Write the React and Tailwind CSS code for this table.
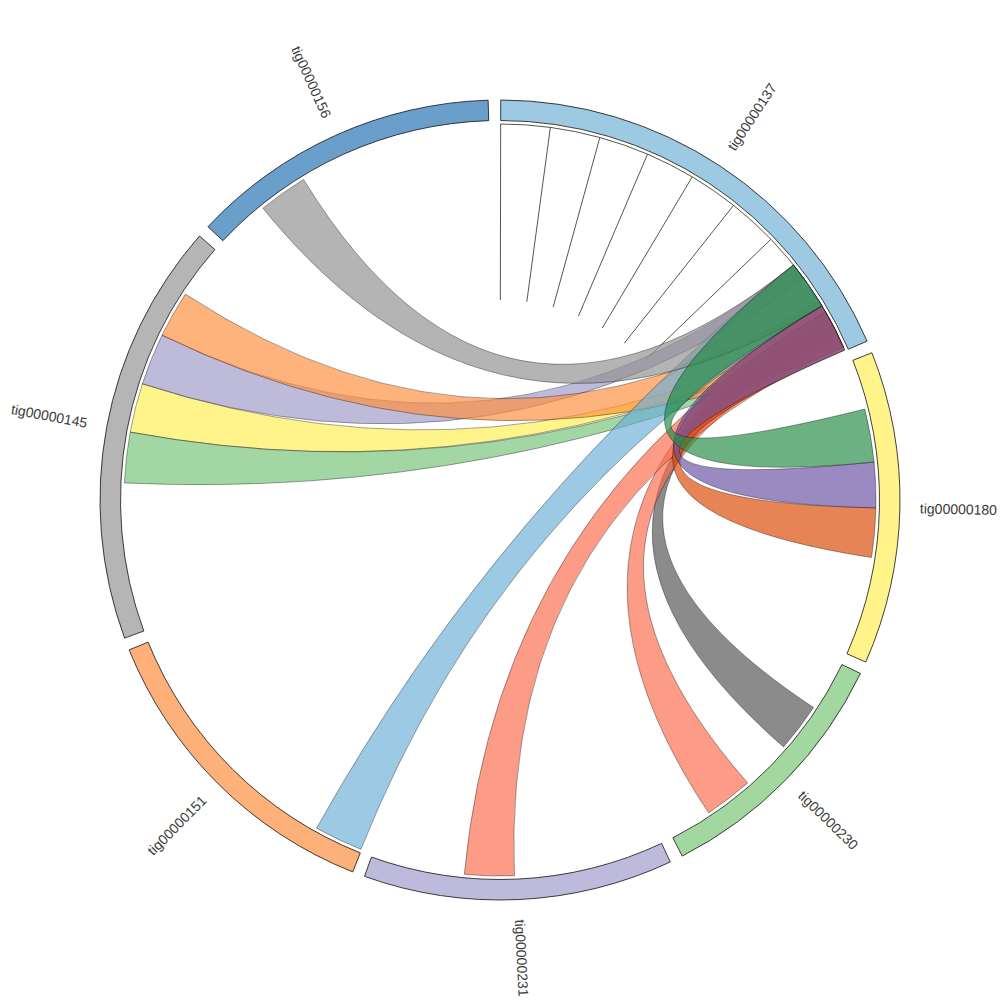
import React from "react";

const CX = 500;
const CY = 500;
const R_OUT = 400;
const R_IN = 379.5;
const R_CHORD = 376;

// angles in degrees, clockwise from 12 o'clock
const groups = [
  { name: "tig00000137", start: 0.1, end: 66.6, color: "#9dc9e2" },
  { name: "tig00000180", start: 68.4, end: 113.9, color: "#fff38a" },
  { name: "tig00000230", start: 115.7, end: 152.9, color: "#a2d8a0" },
  { name: "tig00000231", start: 154.8, end: 199.8, color: "#bdbadb" },
  { name: "tig00000151", start: 201.6, end: 248.0, color: "#fdb077" },
  { name: "tig00000145", start: 249.8, end: 311.3, color: "#b5b5b5" },
  { name: "tig00000156", start: 313.1, end: 358.3, color: "#6a9fcc" },
];

// draw order matters, later ones sit on top
const chords = [
  { s: [280.4, 288], t: [62, 63.5], color: "#ffef50" },
  { s: [272.6, 280.4], t: [64, 66], color: "#74c476" },
  { s: [288, 296], t: [51.4, 54], color: "#9e9ac8" },
  { s: [296, 303.2], t: [58, 66], color: "#fd8d3c" },
  { s: [123.5, 131.05], t: [61, 64], color: "#525252" },
  { s: [138.8, 146.3], t: [60, 65], color: "#fb6a4a" },
  { s: [177.8, 185.45], t: [60, 66], color: "#fb6a4a" },
  { s: [201.7, 209.2], t: [51.3, 58.9], color: "#6baed6" },
  { s: [320.9, 328.5], t: [51.3, 58.9], color: "#8f8f8f" },
  { s: [91.2, 98.8], t: [58.9, 66.5], color: "#d94801" },
  { s: [58.9, 66.5], t: [84.2, 91.2], color: "#6a51a3" },
  { s: [51.3, 58.9], t: [76, 84.2], color: "#238b45" },
];

const selfLinks = [0.1, 7.7, 15.4, 23.1, 30.75, 38.4, 46.1, 53.8, 61.5];

const pt = (deg, r) => {
  const a = (deg * Math.PI) / 180;
  return [CX + r * Math.sin(a), CY - r * Math.cos(a)];
};

const f = (p) => `${p[0].toFixed(2)} ${p[1].toFixed(2)}`;

const arcPath = (a0, a1) => {
  const large = a1 - a0 > 180 ? 1 : 0;
  return [
    `M ${f(pt(a0, R_OUT))}`,
    `A ${R_OUT} ${R_OUT} 0 ${large} 1 ${f(pt(a1, R_OUT))}`,
    `L ${f(pt(a1, R_IN))}`,
    `A ${R_IN} ${R_IN} 0 ${large} 0 ${f(pt(a0, R_IN))}`,
    "Z",
  ].join(" ");
};

const ribbonPath = (s, t) => {
  const r = R_CHORD;
  return [
    `M ${f(pt(s[0], r))}`,
    `A ${r} ${r} 0 0 1 ${f(pt(s[1], r))}`,
    `Q ${CX} ${CY} ${f(pt(t[0], r))}`,
    `A ${r} ${r} 0 0 1 ${f(pt(t[1], r))}`,
    `Q ${CX} ${CY} ${f(pt(s[0], r))}`,
    "Z",
  ].join(" ");
};

const Label = ({ group }) => {
  const mid = (group.start + group.end) / 2;
  const flip = mid > 180;
  const transform = `translate(${CX},${CY}) rotate(${mid - 90}) translate(420,0)${
    flip ? " rotate(180)" : ""
  }`;
  return (
    <g transform={transform}>
      <text
        dy="0.35em"
        textAnchor={flip ? "end" : "start"}
        fontSize="14"
        fill="#3a3a3a"
        style={{ fontFamily: '"Liberation Sans", Arial, sans-serif' }}
      >
        {group.name}
      </text>
    </g>
  );
};

const ChordDiagram = () => {
  const selfArcEnd = pt(61.5, R_CHORD);
  return (
    <svg width="1000" height="1000" viewBox="0 0 1000 1000" className="block">
      {/* self links on tig00000137 */}
      <path
        d={`M ${f(pt(0.1, R_CHORD))} A ${R_CHORD} ${R_CHORD} 0 0 1 ${f(selfArcEnd)}`}
        fill="none"
        stroke="#2b2b1a"
        strokeWidth="0.8"
      />
      {selfLinks.map((a) => {
        const p0 = pt(a, R_CHORD);
        const p1 = pt(a, 200);
        return (
          <line
            key={a}
            x1={p0[0]}
            y1={p0[1]}
            x2={p1[0]}
            y2={p1[1]}
            stroke="#2b2b1a"
            strokeWidth="0.8"
          />
        );
      })}

      {chords.map((c, i) => (
        <path
          key={i}
          d={ribbonPath(c.s, c.t)}
          fill={c.color}
          fillOpacity="0.67"
          stroke="#000"
          strokeOpacity="0.6"
          strokeWidth="0.6"
        />
      ))}

      {groups.map((g) => (
        <path
          key={g.name}
          d={arcPath(g.start, g.end)}
          fill={g.color}
          stroke="#111"
          strokeWidth="0.8"
        />
      ))}

      {groups.map((g) => (
        <Label key={g.name} group={g} />
      ))}
    </svg>
  );
};

export default function App() {
  return (
    <div className="w-[1000px] h-[1000px] bg-white overflow-hidden">
      <ChordDiagram />
    </div>
  );
}
